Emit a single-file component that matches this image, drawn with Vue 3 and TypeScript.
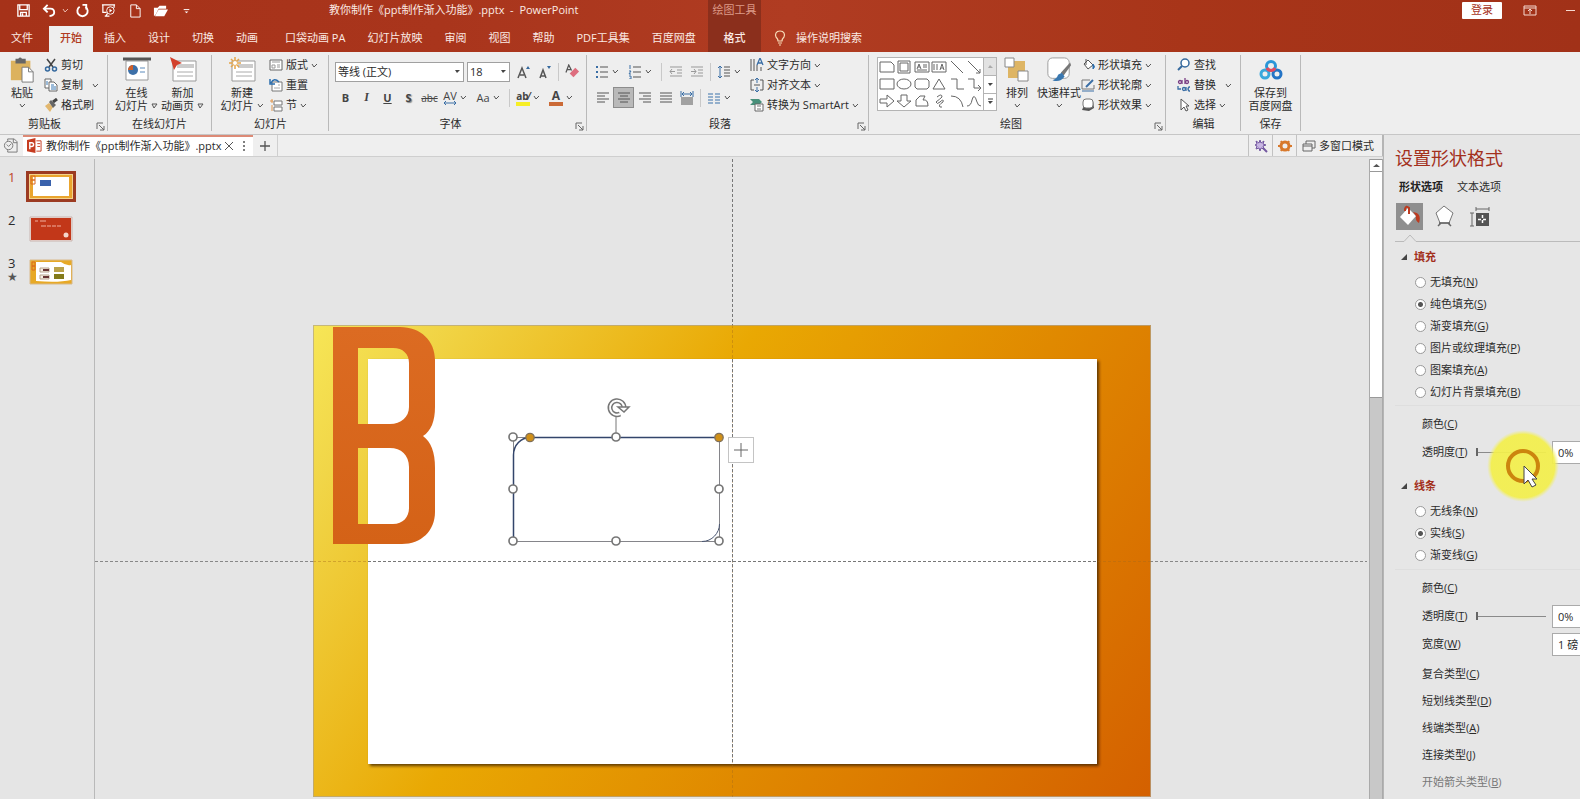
<script setup lang="ts">
import { ref } from 'vue'

interface Choice { value: string; text: string; key: string }

const fileName = '教你制作《ppt制作渐入功能》.pptx'
const tabsBefore = ['文件', '开始', '插入', '设计', '切换', '动画', '口袋动画 PA', '幻灯片放映', '审阅', '视图', '帮助', 'PDF工具集', '百度网盘']
const activeTab = ref('开始')

const quickTools = [
  { id: 'save', label: '保存' }, { id: 'undo', label: '撤消' }, { id: 'redo', label: '重复' },
  { id: 'show', label: '从头开始' }, { id: 'new', label: '新建' }, { id: 'open', label: '打开' }, { id: 'more', label: '自定义' }
]

const fillChoices: Choice[] = [
  { value: 'none', text: '无填充', key: 'N' },
  { value: 'solid', text: '纯色填充', key: 'S' },
  { value: 'gradient', text: '渐变填充', key: 'G' },
  { value: 'picture', text: '图片或纹理填充', key: 'P' },
  { value: 'pattern', text: '图案填充', key: 'A' },
  { value: 'background', text: '幻灯片背景填充', key: 'B' }
]
const lineChoices: Choice[] = [
  { value: 'none', text: '无线条', key: 'N' },
  { value: 'solid', text: '实线', key: 'S' },
  { value: 'gradient', text: '渐变线', key: 'G' }
]
const lineTypes = [
  { text: '复合类型', key: 'C' }, { text: '短划线类型', key: 'D' }, { text: '线端类型', key: 'A' },
  { text: '连接类型', key: 'J' }, { text: '开始箭头类型', key: 'B', off: true }
]
const fill = ref('solid')
const line = ref('solid')
const fillAlpha = ref(0)
const lineAlpha = ref(0)

const aligns = [
  { label: '左对齐', d: 'M1 2H13M1 5H9M1 8H13M1 11H9' },
  { label: '居中', d: 'M1 2H13M3 5H11M1 8H13M3 11H11' },
  { label: '右对齐', d: 'M1 2H13M5 5H13M1 8H13M5 11H13' },
  { label: '两端对齐', d: 'M1 2H13M1 5H13M1 8H13M1 11H13' }
]

const shapes = [
  'M1 2H12L15 5V12H1Z', 'M2 1H14V13H2ZM4 3H12V11H4Z', 'M1 2H15V12H1ZM3 9L5 4L7 9M4 7H6M9 5H13M9 7H13M3 10H13',
  'M1 2H15V12H1ZM3 4V10M6 4V10M9 10L11 4L13 10M10 8H12', 'M2 1L14 13', 'M2 1L14 13M14 9V13H10',
  'M1 2H15V12H1Z', 'M1 7A7 5 0 1 0 15 7A7 5 0 1 0 1 7', 'M3 2H13L15 4V10L13 12H3L1 10V4Z',
  'M8 2L14 12H2Z', 'M2 2H8V12H15', 'M2 2H8V11H14M12 8L15 11L12 14',
  'M1 5H8V1L15 7L8 13V9H1Z', 'M5 1H11V7H15L8 13L1 7H5Z', 'M2 12V6L6 2H11L9 6Q14 5 14 12Z',
  'M6 3Q11 -1 11 3Q9 5 5 8Q6 11 9 8Q13 4 12 8Q7 11 9 13H11', 'M2 2Q12 2 14 13', 'M1 12Q5 12 6 6Q8 -2 11 8Q12 12 15 12'
]

const handles = [
  [200, 112], [303, 112], [200, 164], [406, 164], [200, 216], [303, 216], [406, 216]
]
</script>

<template>
  <svg class="sprite" aria-hidden="true">
    <symbol id="chev" viewBox="0 0 7 7"><path d="M1 2L3 5L6 2" fill="none" stroke="#555" /></symbol>
    <symbol id="tri" viewBox="0 0 7 7"><path d="M1 2H6L3 5Z" fill="#444" /></symbol>
    <symbol id="trio" viewBox="0 0 7 7"><path d="M1 2H6L3 6Z" fill="none" stroke="#555" /></symbol>
    <symbol id="launch" viewBox="0 0 9 9"><path d="M1 7V1H7M3 3L8 8M8 4V8H4" fill="none" stroke="#666" /></symbol>

    <symbol id="save" viewBox="0 0 16 16"><path d="M2 2H14V14H2ZM4 2V7H12V2M5 14V10H11V14M7 11V14" fill="none" stroke="#fff" stroke-width="1.4" /></symbol>
    <symbol id="undo" viewBox="0 0 16 16"><path d="M2 6H9Q13 6 13 10Q13 13 8 14M6 2L2 6L6 10" fill="none" stroke="#fff" stroke-width="2" /></symbol>
    <symbol id="redo" viewBox="0 0 16 16"><path d="M5 4A5.500 5.500 0 1 0 11 4M8 2H13M12 2V7" fill="none" stroke="#fff" stroke-width="2" /></symbol>
    <symbol id="show" viewBox="0 0 16 16"><path d="M1 2H15M2 2V10H6M14 2V5M5 14L7 11M4 14H9" fill="none" stroke="#fff" stroke-width="1.300" /><circle cx="10" cy="8" r="4" fill="none" stroke="#fff" /><path d="M9 6L12 8L9 10Z" fill="#fff" /></symbol>
    <symbol id="new" viewBox="0 0 16 16"><path d="M4 2H10L14 6V15H4ZM10 2V6H14" fill="none" stroke="#fff" /></symbol>
    <symbol id="open" viewBox="0 0 16 16"><path d="M1 14V5H5L7 3H14V6H6L3 12Z M2 14L6 7H16L12 14Z" fill="#fff" /></symbol>
    <symbol id="more" viewBox="0 0 16 16"><path d="M5 7H11" stroke="#fff" /><path d="M6 9H10L8 11Z" fill="#fff" /></symbol>

    <symbol id="paste" viewBox="0 0 26 28"><path d="M1 4H22V25H1Z" fill="#dcb25e" /><path d="M6 2H9Q11 -1 13 2H17V7H6Z" fill="#666" /><path d="M13 11H20L25 16V27H13Z" fill="#fff" stroke="#777" /><path d="M20 11V16H25" fill="none" stroke="#777" /></symbol>
    <symbol id="cut" viewBox="0 0 14 14"><path d="M3 1L9 9M11 1L5 9" stroke="#444" stroke-width="1.500" /><circle cx="3.500" cy="11" r="2" fill="none" stroke="#35699e" stroke-width="1.500" /><circle cx="10.500" cy="11" r="2" fill="none" stroke="#35699e" stroke-width="1.500" /></symbol>
    <symbol id="copy" viewBox="0 0 14 14"><path d="M1 1H7V10H1Z" fill="#fff" stroke="#666" /><path d="M5 4H10L13 7V13H5Z" fill="#fff" stroke="#666" /><path d="M7 7H10M7 9H12M7 11H12M2 4H4M2 6H4" stroke="#3a78b4" /></symbol>
    <symbol id="brush" viewBox="0 0 14 14"><path d="M1 8L5 5L9 9L6 14Z" fill="#e2b76e" /><path d="M5 4L7 2L12 7L9 10Z" fill="#666" /><path d="M9 4L13 1" stroke="#444" stroke-width="3" /></symbol>
    <symbol id="online" viewBox="0 0 28 26"><path d="M3 4H25V23H3Z" fill="#fff" stroke="#999" /><path d="M0 2H28" stroke="#555" stroke-width="3" /><circle cx="10" cy="13" r="5" fill="#3d70a8" /><path d="M10 13V8A5 5 0 0 0 5 13Z" fill="#d0602a" /><path d="M17 11H22M17 15H22" stroke="#5b8abb" /></symbol>
    <symbol id="anim" viewBox="0 0 28 26"><path d="M4 4H27V24H4Z" fill="#fff" stroke="#999" /><path d="M8 7H25V11H8Z" fill="#ccc" /><path d="M8 15H24M8 19H24" stroke="#aaa" /><path d="M1 0L13 6L8 8L5 13Z" fill="#d2402c" /></symbol>
    <symbol id="slide" viewBox="0 0 28 26"><path d="M4 4H27V24H4Z" fill="#fff" stroke="#999" /><path d="M10 7H25V11H10Z" fill="#ccc" /><path d="M8 15H24M8 19H24" stroke="#aaa" /><path d="M7 0V12M1 6H13M3 2L11 10M11 2L3 10" stroke="#e5a54a" stroke-width="1.500" /><circle cx="7" cy="6" r="2" fill="#fff" /></symbol>
    <symbol id="layout" viewBox="0 0 14 14"><path d="M1 2H13V12H1Z" fill="#fff" stroke="#666" /><path d="M3 4H11M3 7H6V10H3ZM8 7H11M8 9H11" fill="none" stroke="#999" /></symbol>
    <symbol id="reset" viewBox="0 0 14 14"><path d="M3 4H13V13H3Z" fill="#fff" stroke="#777" /><path d="M5 10H11M9 7H11" stroke="#aaa" /><path d="M2 5Q5 -1 10 4M1 1V6H6" fill="none" stroke="#2d6fae" stroke-width="1.500" /></symbol>
    <symbol id="section" viewBox="0 0 14 14"><path d="M5 3H13V7H5ZM5 9H13V13H5Z" fill="#fff" stroke="#777" /><path d="M1 3H4M3 1V5M3 7V13" stroke="#e0974e" /></symbol>

    <symbol id="eraser" viewBox="0 0 16 16"><path d="M1 9L4 1L7 7M2 6H6" fill="none" stroke="#555" stroke-width="1.300" /><path d="M5 10L11 4L15 8L9 14Z" fill="#dd6d7e" /></symbol>
    <symbol id="bullets" viewBox="0 0 14 14"><path d="M1 2H3M1 7H3M1 12H3" stroke="#3a6ea5" stroke-width="2" /><path d="M5 2H13M5 7H13M5 12H13" stroke="#555" /></symbol>
    <symbol id="numbers" viewBox="0 0 14 14"><path d="M2 0V4M1 6H3L1 9H3M1 11H3V14H1" fill="none" stroke="#3a6ea5" /><path d="M5 2H13M5 7H13M5 12H13" stroke="#555" /></symbol>
    <symbol id="outdent" viewBox="0 0 14 14"><path d="M1 2H13M8 5H13M8 8H13M1 11H13M1 6.500H6M3 4L1 6.500L3 9" fill="none" stroke="#999" /></symbol>
    <symbol id="indent" viewBox="0 0 14 14"><path d="M1 2H13M8 5H13M8 8H13M1 11H13M1 6.500H6M4 4L6 6.500L4 9" fill="none" stroke="#999" /></symbol>
    <symbol id="spacing" viewBox="0 0 14 14"><path d="M3 1V13M1 3L3 1L5 3M1 11L3 13L5 11" fill="none" stroke="#3a6ea5" /><path d="M7 2H13M7 5H13M7 8H13M7 11H13" stroke="#555" /></symbol>
    <symbol id="dist" viewBox="0 0 14 14"><path d="M1 0V6M13 0V6M2 3H12M4 1L2 3L4 5M10 1L12 3L10 5" fill="none" stroke="#3a6ea5" /><path d="M1 7H13M1 9H13M1 11H13M1 13H13" stroke="#555" /></symbol>
    <symbol id="columns" viewBox="0 0 14 14"><path d="M1 3H6M1 6H6M1 9H6M1 12H6M8 3H13M8 6H13M8 9H13M8 12H13" stroke="#3a72ab" /></symbol>
    <symbol id="textdir" viewBox="0 0 14 14"><path d="M1 1V13M4 1V13M7 7V13M11 9V13" stroke="#555" /><path d="M7 7L10 0L13 7M8 5H12" fill="none" stroke="#3a6ea5" stroke-width="1.300" /></symbol>
    <symbol id="aligntext" viewBox="0 0 14 14"><path d="M4 2H1V12H4M10 2H13V12H10M4 7H10" fill="none" stroke="#555" /><path d="M7 0V5M5 2L7 0L9 2M7 9V14M5 12L7 14L9 12" fill="none" stroke="#3a6ea5" /></symbol>
    <symbol id="smart" viewBox="0 0 14 14"><path d="M0 1H9L12 4L9 7H0L3 4Z" fill="#48907a" /><path d="M5 6H13V13H5Z" fill="#fff" stroke="#666" /><path d="M7 8H11M7 11H11" stroke="#777" /></symbol>

    <symbol id="arrange" viewBox="0 0 26 26"><path d="M4 4H21V21H4Z" fill="#deb564" /><path d="M1 1H10V10H1ZM14 14H24V24H14Z" fill="#fff" stroke="#888" /></symbol>
    <symbol id="quick" viewBox="0 0 26 28"><rect x="1" y="1" width="23" height="22" rx="5" fill="#fff" stroke="#999" /><path d="M25 6L15 17L18 20L26 9Z" fill="#777" /><path d="M16 17L19 21Q14 28 6 25Q11 23 12 19Z" fill="#3a78b0" /></symbol>
    <symbol id="sfill" viewBox="0 0 14 14"><path d="M3 6L7 2L12 7L7 11Z" fill="#fff" stroke="#555" /><path d="M5 7V1" stroke="#555" /><path d="M12 6Q15 9 12 11Z" fill="#2d6fae" stroke="#2d6fae" /></symbol>
    <symbol id="sline" viewBox="0 0 14 14"><path d="M9 2H1V11H13V7" fill="none" stroke="#777" /><path d="M5 9L12 2" stroke="#3a6ea5" stroke-width="2" /><path d="M1 13H13" stroke="#3a6ea5" /></symbol>
    <symbol id="seffect" viewBox="0 0 14 14"><path d="M4 5L12 3L13 10L8 13L1 12Z" fill="#555" /><rect x="2" y="1" width="10" height="9" rx="3" fill="#fff" stroke="#777" /></symbol>
    <symbol id="find" viewBox="0 0 14 14"><circle cx="8" cy="5" r="4" fill="#fff" stroke="#35699e" stroke-width="1.500" /><path d="M5 8L1 12" stroke="#35699e" stroke-width="2" /></symbol>
    <symbol id="replace" viewBox="0 0 14 14"><circle cx="3" cy="4" r="1.500" fill="none" stroke="#7b3f85" stroke-width="1.300" /><path d="M5 2V6M8 0V6" stroke="#7b3f85" stroke-width="1.300" /><circle cx="10" cy="4" r="1.500" fill="none" stroke="#7b3f85" stroke-width="1.300" /><circle cx="7" cy="11" r="1.500" fill="none" stroke="#3a6ea5" stroke-width="1.300" /><path d="M9 9V13M13 9H12Q10 11 12 13H13M1 8V11H4" fill="none" stroke="#3a6ea5" stroke-width="1.300" /></symbol>
    <symbol id="select" viewBox="0 0 14 14"><path d="M4 1V12L7 9L9 13L11 12L9 8H12Z" fill="#fff" stroke="#555" /></symbol>
    <symbol id="netdisk" viewBox="0 0 24 20"><circle cx="6" cy="14" r="4" fill="none" stroke="#3aa8dc" stroke-width="3" /><circle cx="18" cy="14" r="4" fill="none" stroke="#2374c6" stroke-width="3" /><circle cx="12" cy="6" r="4.500" fill="none" stroke="#2a96d8" stroke-width="3" /><path d="M8 8A4.500 4.500 0 0 0 16 8" fill="none" stroke="#e44a5e" stroke-width="3" /></symbol>
  </svg>

  <div class="app">
    <header class="head">
      <div class="head-main">
        <div class="bar">
          <div class="quick">
            <template v-for="q in quickTools" :key="q.id">
              <button class="qbtn" :aria-label="q.label"><svg class="i15"><use :href="'#' + q.id" /></svg></button>
              <svg v-if="q.id === 'undo'" class="qchev" viewBox="0 0 7 7"><path d="M1 2L3 5L6 2" fill="none" stroke="#e9b6a8" /></svg>
            </template>
          </div>
          <h1 class="title">{{ fileName }}&nbsp; -&nbsp; PowerPoint</h1>
        </div>
        <nav class="tabs">
          <button v-for="t in tabsBefore" :key="t" class="tab" :class="{ on: t === activeTab, shift: t.startsWith('口袋') || t === '开始' }" @click="activeTab = t">{{ t }}</button>
        </nav>
      </div>
      <div class="context">
        <span class="context-name">绘图工具</span>
        <button class="context-tab">格式</button>
      </div>
      <div class="head-end">
        <div class="bar end">
          <button class="login">登录</button>
          <button class="winbtn" aria-label="功能区显示选项"><svg class="i14" viewBox="0 0 14 14"><path d="M1 3H13V12H1ZM1 5H13M7 11V6M5 8L7 6L9 8" fill="none" stroke="#f6d9d0" /></svg></button>
          <button class="winbtn" aria-label="最小化"><svg class="i14" viewBox="0 0 14 14"><path d="M3 7.500H12" stroke="#f6d9d0" /></svg></button>
        </div>
        <button class="tell">
          <svg class="bulb" viewBox="0 0 12 16"><path d="M4 11Q4 9 2 7Q1 5 2 3Q3 1 6 1Q9 1 10 3Q11 5 10 7Q8 9 8 11ZM4 13H8M5 15H7" fill="none" stroke="#f7dcb8" stroke-width="1.200" /></svg>
          操作说明搜索
        </button>
      </div>
    </header>

    <section class="ribbon" aria-label="功能区">
      <div class="group g-clip">
        <div class="body">
          <button class="big w44"><svg class="ibig"><use href="#paste" /></svg><span>粘贴</span><svg class="c7"><use href="#chev" /></svg></button>
          <div class="rows">
            <button class="small"><svg class="i14"><use href="#cut" /></svg>剪切</button>
            <button class="small"><svg class="i14"><use href="#copy" /></svg>复制<svg class="c7 far"><use href="#chev" /></svg></button>
            <button class="small"><svg class="i14"><use href="#brush" /></svg>格式刷</button>
          </div>
        </div>
        <div class="foot"><span>剪贴板</span><button class="launch" aria-label="剪贴板选项"><svg><use href="#launch" /></svg></button></div>
      </div>

      <div class="group g-online">
        <div class="body center">
          <button class="big w46"><svg class="ibig"><use href="#online" /></svg><span>在线</span><span>幻灯片 <svg class="c7"><use href="#trio" /></svg></span></button>
          <button class="big w46"><svg class="ibig"><use href="#anim" /></svg><span>新加</span><span>动画页 <svg class="c7"><use href="#trio" /></svg></span></button>
        </div>
        <div class="foot"><span>在线幻灯片</span></div>
      </div>

      <div class="group g-slide">
        <div class="body">
          <button class="big w46"><svg class="ibig"><use href="#slide" /></svg><span>新建</span><span>幻灯片 <svg class="c7"><use href="#chev" /></svg></span></button>
          <div class="rows">
            <button class="small"><svg class="i14"><use href="#layout" /></svg>版式<svg class="c7"><use href="#chev" /></svg></button>
            <button class="small"><svg class="i14"><use href="#reset" /></svg>重置</button>
            <button class="small"><svg class="i14"><use href="#section" /></svg>节<svg class="c7"><use href="#chev" /></svg></button>
          </div>
        </div>
        <div class="foot"><span>幻灯片</span></div>
      </div>

      <div class="group g-font">
        <div class="body lines">
          <div class="line">
            <div class="combo face"><select aria-label="字体"><option>等线 (正文)</option></select><svg class="c7"><use href="#tri" /></svg></div>
            <div class="combo size"><select aria-label="字号"><option>18</option></select><svg class="c7"><use href="#tri" /></svg></div>
            <button class="tool" aria-label="增大字号"><svg class="i14" viewBox="0 0 14 14"><path d="M1 13L5 3L9 13M3 10H7" fill="none" stroke="#555" stroke-width="1.500" /><path d="M9 4L11 1L13 4Z" fill="#35699e" /></svg></button>
            <button class="tool" aria-label="减小字号"><svg class="i14" viewBox="0 0 14 14"><path d="M2 13L5 5L8 13M3 11H7" fill="none" stroke="#555" stroke-width="1.500" /><path d="M9 1L11 4L13 1Z" fill="#35699e" /></svg></button>
            <i class="sep"></i>
            <button class="tool" aria-label="清除格式"><svg class="i15"><use href="#eraser" /></svg></button>
          </div>
          <div class="line">
            <button class="tool b">B</button>
            <button class="tool it">I</button>
            <button class="tool un">U</button>
            <button class="tool sh">S</button>
            <button class="tool st">abc</button>
            <button class="split"><span class="face20 av">AV<svg viewBox="0 0 14 4"><path d="M1 2H13M3 0L1 2L3 4M11 0L13 2L11 4" fill="none" stroke="#3a6ea5" /></svg></span><svg class="c7"><use href="#chev" /></svg></button>
            <button class="split"><span class="face20 aa">Aa</span><svg class="c7"><use href="#chev" /></svg></button>
            <i class="sep"></i>
            <button class="split"><span class="face20 mark hl">ab⁄</span><svg class="c7"><use href="#chev" /></svg></button>
            <button class="split"><span class="face20 mark fc">A</span><svg class="c7"><use href="#chev" /></svg></button>
          </div>
        </div>
        <div class="foot"><span>字体</span><button class="launch" aria-label="字体选项"><svg><use href="#launch" /></svg></button></div>
      </div>

      <div class="group g-para">
        <div class="body">
          <div class="lines para-left">
            <div class="line">
              <button class="split" aria-label="项目符号"><span class="face20"><svg class="i14"><use href="#bullets" /></svg></span><svg class="c7"><use href="#chev" /></svg></button>
              <button class="split" aria-label="编号"><span class="face20"><svg class="i14"><use href="#numbers" /></svg></span><svg class="c7"><use href="#chev" /></svg></button>
              <i class="sep"></i>
              <button class="tool" aria-label="减少缩进"><svg class="i14"><use href="#outdent" /></svg></button>
              <button class="tool" aria-label="增加缩进"><svg class="i14"><use href="#indent" /></svg></button>
              <i class="sep"></i>
              <button class="split" aria-label="行距"><span class="face20"><svg class="i14"><use href="#spacing" /></svg></span><svg class="c7"><use href="#chev" /></svg></button>
            </div>
            <div class="line">
              <button v-for="a in aligns" :key="a.label" class="tool" :class="{ pressed: a.label === '居中' }" :aria-label="a.label"><svg class="i14" viewBox="0 0 14 14"><path :d="a.d" stroke="#555" /></svg></button>
              <button class="tool" aria-label="分散对齐"><svg class="i14"><use href="#dist" /></svg></button>
              <i class="sep"></i>
              <button class="split" aria-label="分栏"><span class="face20"><svg class="i14"><use href="#columns" /></svg></span><svg class="c7"><use href="#chev" /></svg></button>
            </div>
          </div>
          <div class="rows">
            <button class="small"><svg class="i14"><use href="#textdir" /></svg>文字方向<svg class="c7"><use href="#chev" /></svg></button>
            <button class="small"><svg class="i14"><use href="#aligntext" /></svg>对齐文本<svg class="c7"><use href="#chev" /></svg></button>
            <button class="small"><svg class="i14"><use href="#smart" /></svg>转换为 SmartArt<svg class="c7"><use href="#chev" /></svg></button>
          </div>
        </div>
        <div class="foot"><span>段落</span><button class="launch" aria-label="段落选项"><svg><use href="#launch" /></svg></button></div>
      </div>

      <div class="group g-draw">
        <div class="body">
          <div class="gallery">
            <div class="cells">
              <button v-for="(d, n) in shapes" :key="n" class="cell" :aria-label="'形状 ' + (n + 1)"><svg viewBox="0 0 16 14"><path :d="d" fill="none" stroke="#666" /></svg></button>
            </div>
            <div class="scroll">
              <button aria-label="上一行" class="dim"><svg viewBox="0 0 7 7"><path d="M1 5H6L3 2Z" fill="#aaa" /></svg></button>
              <button aria-label="下一行"><svg><use href="#tri" /></svg></button>
              <button aria-label="更多形状"><svg viewBox="0 0 7 7"><path d="M1 1H6" stroke="#444" /><path d="M1 3H6L3 6Z" fill="#444" /></svg></button>
            </div>
          </div>
          <button class="big w40"><svg class="ibig"><use href="#arrange" /></svg><span>排列</span><svg class="c7"><use href="#chev" /></svg></button>
          <button class="big w44"><svg class="ibig"><use href="#quick" /></svg><span>快速样式</span><svg class="c7"><use href="#chev" /></svg></button>
          <div class="rows">
            <button class="small"><svg class="i14"><use href="#sfill" /></svg>形状填充<svg class="c7"><use href="#chev" /></svg></button>
            <button class="small"><svg class="i14"><use href="#sline" /></svg>形状轮廓<svg class="c7"><use href="#chev" /></svg></button>
            <button class="small"><svg class="i14"><use href="#seffect" /></svg>形状效果<svg class="c7"><use href="#chev" /></svg></button>
          </div>
        </div>
        <div class="foot"><span>绘图</span><button class="launch" aria-label="绘图选项"><svg><use href="#launch" /></svg></button></div>
      </div>

      <div class="group g-edit">
        <div class="body">
          <div class="rows">
            <button class="small"><svg class="i14"><use href="#find" /></svg>查找</button>
            <button class="small"><svg class="i14"><use href="#replace" /></svg>替换<svg class="c7 far"><use href="#chev" /></svg></button>
            <button class="small"><svg class="i14"><use href="#select" /></svg>选择<svg class="c7"><use href="#chev" /></svg></button>
          </div>
        </div>
        <div class="foot"><span>编辑</span></div>
      </div>

      <div class="group g-save">
        <div class="body center">
          <button class="big w46"><svg class="ibig disk"><use href="#netdisk" /></svg><span>保存到</span><span>百度网盘</span></button>
        </div>
        <div class="foot"><span>保存</span></div>
      </div>
    </section>

    <div class="work">
      <div class="left">
        <div class="docbar">
          <button class="dhome" aria-label="历史文档"><svg class="i15" viewBox="0 0 16 16"><path d="M5 3V1H12L15 4V15H5V13M11 1V5H15" fill="none" stroke="#777" /><circle cx="6" cy="8" r="4.500" fill="#eee" stroke="#777" /><path d="M4 7L6 9L9 6" fill="none" stroke="#777" /></svg></button>
          <div class="doctab">
            <svg class="i15" viewBox="0 0 16 16"><path d="M0 2L9 0V16L0 14Z" fill="#c63c20" /><path d="M10 3H15V14H10M11 6H14M11 9H14" fill="none" stroke="#c63c20" /><path d="M3 12V5H5Q7 5 7 7Q7 9 5 9H3" fill="none" stroke="#fff" stroke-width="1.500" /></svg>
            <span class="docname">{{ fileName }}</span>
            <button aria-label="关闭"><svg class="i10" viewBox="0 0 10 10"><path d="M1 1L9 9M9 1L1 9" stroke="#555" /></svg></button>
            <button aria-label="更多"><svg class="i10" viewBox="0 0 10 10"><path d="M5 0V2M5 4V6M5 8V10" stroke="#555" stroke-width="1.500" /></svg></button>
          </div>
          <button class="dadd" aria-label="新建标签"><svg class="i12" viewBox="0 0 12 12"><path d="M6 1V11M1 6H11" stroke="#555" stroke-width="1.300" /></svg></button>
          <div class="docend">
            <button class="dtool" aria-label="魔法棒"><svg class="i14" viewBox="0 0 14 14"><path d="M6 1L7 4L10 2L9 5L12 6L9 7L10 10L7 9L6 12L5 9L2 10L3 7L1 6L3 5L2 2L5 4Z" fill="#c8b6e2" stroke="#7358a0" /><path d="M9 9L13 13" stroke="#7358a0" stroke-width="2" /></svg></button>
            <button class="dtool" aria-label="设置"><svg class="i14" viewBox="0 0 14 14"><circle cx="7" cy="7" r="4" fill="none" stroke="#d8792c" stroke-width="3" /><path d="M3 2L4 4M11 2L10 4M3 12L4 10M11 12L10 10M0 7H3M11 7H14" stroke="#d8792c" stroke-width="2" /></svg></button>
            <button class="multi"><svg class="i14" viewBox="0 0 14 14"><path d="M1 5H10V12H1ZM1 7H10M4 5V2H13V9H10" fill="none" stroke="#666" /></svg>多窗口模式</button>
          </div>
        </div>

        <div class="desk">
          <aside class="thumbs">
            <button class="thumb on">
              <span class="no">1</span>
              <svg viewBox="0 0 50 31"><path d="M0 0H50V31H0Z" fill="#9c3b22" /><path d="M3 3H47V28H3Z" fill="#f3d28c" /><path d="M4 4H46V27H4Z" fill="#eaa52e" /><path d="M7 6H43V25H7Z" fill="#fff" /><path d="M5 5H9V9H5ZM5 9H9V13H5Z" fill="none" stroke="#da6a20" /><path d="M14 9H25V15H14Z" fill="#3a62ac" /></svg>
            </button>
            <button class="thumb">
              <span class="no">2</span>
              <svg viewBox="0 0 50 31"><path d="M4 3H46V27H4Z" fill="#f4ded8" stroke="#c9b5b0" /><path d="M5 4H45V26H5Z" fill="#c23719" /><path d="M9 7H12M14 7H20M15 12H20M21 12H25M26 12H30M31 12H35" stroke="#f0b0a0" /><circle cx="40" cy="21" r="2.500" fill="#f4d6cc" /></svg>
            </button>
            <button class="thumb">
              <span class="no">3<em>★</em></span>
              <svg viewBox="0 0 50 31"><path d="M4 3H46V27H4Z" fill="#e7a926" stroke="#d8b98a" /><path d="M10 5H35Q40 9 45 8V23Q32 26 10 24Z" fill="#fff" /><path d="M6 5H9V9H6ZM6 9H9V13H6Z" fill="none" stroke="#da6a20" /><path d="M14 11H23V15H14ZM14 18H23V22H14Z" fill="#f5eee4" stroke="#b5a08a" /><path d="M17 13H23M17 20H23" stroke="#633" stroke-width="2" /><path d="M28 10H38V15H28Z" fill="#baa24a" /><path d="M28 17H38V22H28Z" fill="#837b1b" /></svg>
            </button>
          </aside>

          <main class="canvas">
            <i class="vguide"></i>
            <div class="stage">
              <i class="hguide"></i>
              <svg class="slide" viewBox="0 0 838 472">
                <defs>
                  <linearGradient id="gold" gradientUnits="userSpaceOnUse" x1="0" y1="0" x2="778" y2="556">
                    <stop offset="0" stop-color="#f7e656" /><stop offset=".1" stop-color="#f1d648" /><stop offset=".38" stop-color="#e9a803" /><stop offset=".64" stop-color="#e08900" /><stop offset="1" stop-color="#d46000" />
                  </linearGradient>
                  <linearGradient id="rust" x1="0" y1="0" x2="0" y2="1"><stop offset="0" stop-color="#dc6b22" /><stop offset="1" stop-color="#d46217" /></linearGradient>
                  <filter id="drop" x="-5%" y="-5%" width="110%" height="110%"><feDropShadow dx="2" dy="2" stdDeviation="1.500" flood-color="#3c2400" flood-opacity=".8" /></filter>
                </defs>
                <rect width="838" height="472" fill="url(#gold)" />
                <rect x=".5" y=".5" width="837" height="471" fill="none" stroke="#b0a48c" stroke-opacity=".7" />
                <rect x="55" y="34" width="729" height="405" fill="#fff" filter="url(#drop)" />
                <path fill="url(#rust)" fill-rule="evenodd" d="M20 2H87C108 2 122 16 122 35V82C122 96 118 106 110 111C118 117 122 127 122 143V187C122 206 108 219 89 219H20ZM45 23V99H77C88 99 96 92 96 82V38C96 29 90 23 80 23ZM45 123V199H80C90 199 96 192 96 183V142C96 130 88 123 77 123Z" />
                <path d="M419.500 0V472M0 236.500H838" stroke="#a66a1a" stroke-opacity=".4" stroke-dasharray="3 2" />
                <path d="M419.500 34V439M55 236.500H784" stroke="#777" stroke-dasharray="3 2" />
                <path d="M200.500 112.500H406.500V216.500H200.500Z" fill="#fff" stroke="#85858a" />
                <path d="M200.500 216.500V130C200.500 120 208 112.500 217 112.500H406.500" fill="none" stroke="#33456b" stroke-width="1.500" />
                <path d="M406.500 199C406.500 208 399 216.500 389 216.500" fill="none" stroke="#4a5672" />
                <path d="M303 112V92" stroke="#777" />
                <circle v-for="h in handles" :key="h.join()" :cx="h[0]" :cy="h[1]" r="4" fill="#fff" stroke="#777" stroke-width="1.700" />
                <circle cx="217" cy="112.500" r="4.200" fill="#d09018" stroke="#80705a" stroke-width="1.300" />
                <circle cx="406" cy="112.500" r="4.200" fill="#d09018" stroke="#80705a" stroke-width="1.300" />
                <path d="M307 89A7 7 0 1 1 311 83" fill="none" stroke="#777" stroke-width="5" />
                <path d="M307 89A7 7 0 1 1 311 83" fill="none" stroke="#fff" stroke-width="2" />
                <path d="M305 82H316L311 87Z" fill="#fff" stroke="#777" stroke-width="1.500" />
              </svg>
              <button class="addon" aria-label="布局选项"><svg viewBox="0 0 16 16"><path d="M8 1V15M1 8H15" stroke="#666" /></svg></button>
            </div>
          </main>

          <div class="vbar">
            <button aria-label="向上滚动"><svg viewBox="0 0 9 9"><path d="M1 6H8L4.500 3Z" fill="#555" /></svg></button>
            <div class="knob"></div>
          </div>
        </div>
      </div>

      <aside class="pane">
        <h2>设置形状格式</h2>
        <div class="ptabs"><button class="on">形状选项</button><button>文本选项</button></div>
        <div class="picons">
          <button class="on" aria-label="填充与线条"><svg viewBox="0 0 27 27"><path d="M4 14L12 5L20 13L12 22Z" fill="#fff" /><path d="M9 8V6Q10 2 13 5V11" fill="none" stroke="#bd3b20" stroke-width="2" /><path d="M17 9Q26 10 23 20Q19 18 20 13Z" fill="#bd3b20" /></svg></button>
          <button aria-label="效果"><svg viewBox="0 0 27 27"><path d="M13 3L22 10L18 20H9L5 10Z" fill="#fff" stroke="#777" /><path d="M8 20H19M7 23L10 20M20 23L17 20" stroke="#666" stroke-width="1.500" /></svg></button>
          <button aria-label="大小与属性"><svg viewBox="0 0 27 27"><path d="M10 10H23V23H10Z" fill="#555" /><path d="M10 6H23M10 4V8M23 4V8M6 10V23M4 10H8M4 23H8" stroke="#666" /><path d="M16.500 12V21M12 16.500H21" stroke="#fff" stroke-width="1.500" stroke-dasharray="3 2" /></svg></button>
        </div>
        <div class="rule"><i></i><svg viewBox="0 0 12 8"><path d="M0 7.500L6 1L12 7.500" fill="#e6e6e6" stroke="#bbb" /></svg><i class="rest"></i></div>

        <button class="sec"><svg viewBox="0 0 8 8"><path d="M7 1V7H1Z" fill="#444" /></svg>填充</button>
        <div class="radios">
          <label v-for="c in fillChoices" :key="c.value"><input v-model="fill" type="radio" name="fill" :value="c.value" /><span>{{ c.text }}(<u>{{ c.key }}</u>)</span></label>
        </div>
        <div class="opts">
          <div class="opt"><span>颜色(<u>C</u>)</span></div>
          <div class="opt"><label for="fa">透明度(<u>T</u>)</label><input id="fa" v-model="fillAlpha" type="range" min="0" max="100" /><input class="num" type="text" :value="fillAlpha + '%'" aria-label="填充透明度" /></div>
        </div>

        <button class="sec"><svg viewBox="0 0 8 8"><path d="M7 1V7H1Z" fill="#444" /></svg>线条</button>
        <div class="radios">
          <label v-for="c in lineChoices" :key="c.value"><input v-model="line" type="radio" name="line" :value="c.value" /><span>{{ c.text }}(<u>{{ c.key }}</u>)</span></label>
        </div>
        <div class="opts last">
          <div class="opt"><span>颜色(<u>C</u>)</span></div>
          <div class="opt"><label for="la">透明度(<u>T</u>)</label><input id="la" v-model="lineAlpha" type="range" min="0" max="100" /><input class="num" type="text" :value="lineAlpha + '%'" aria-label="线条透明度" /></div>
          <div class="opt"><label for="lw">宽度(<u>W</u>)</label><input id="lw" class="num" type="text" value="1 磅" /></div>
        </div>
        <div class="types">
          <div v-for="t in lineTypes" :key="t.key" :class="{ off: t.off }">{{ t.text }}(<u>{{ t.key }}</u>)</div>
        </div>

        <svg class="pointer" viewBox="0 0 72 72" aria-hidden="true">
          <defs><radialGradient id="halo"><stop offset=".88" stop-color="#f3ef4c" stop-opacity=".93" /><stop offset="1" stop-color="#f0ee7a" stop-opacity="0" /></radialGradient></defs>
          <circle cx="36" cy="36" r="36" fill="url(#halo)" />
          <circle cx="36" cy="36" r="15" fill="none" stroke="#cc850e" stroke-width="4" />
          <path d="M37 36V54L41 50L45 57L49 55L45 49H50Z" fill="#fff" stroke="#444" />
        </svg>
      </aside>
    </div>
  </div>
</template>

<style>
html, body { margin: 0; overflow: hidden; }
</style>

<style scoped>
.sprite { position: absolute; width: 0; height: 0; }
.app {
  display: flex; flex-direction: column; height: 100vh; overflow: hidden;
  background: #e5e5e5; color: #2b2b2b; font: 11px/14px "Open Sans", "Noto Sans CJK SC", sans-serif;
}
.app * { box-sizing: border-box; }
button, input, select { font: inherit; color: inherit; margin: 0; padding: 0; border: 0; background: none; }
button { display: flex; align-items: center; justify-content: center; white-space: nowrap; }
svg { display: block; flex: none; }
i { font-style: normal; }
.i15 { width: 15px; height: 15px; }
.i14 { width: 14px; height: 14px; }
.i12 { width: 12px; height: 12px; }
.i10 { width: 10px; height: 10px; }
.c7 { width: 7px; height: 7px; }

.head { display: flex; height: 52px; flex: none; color: #fbeae4; background: linear-gradient(90deg, #a63219, #a9351c 28%, #b03c22 50%, #a83519 75%, #a13118); }
.head-main { width: 708px; flex: none; }
.bar { display: flex; align-items: center; height: 20px; margin-bottom: 6px; }
.quick { display: flex; align-items: center; padding-left: 10px; width: 329px; }
.qbtn { width: 26px; height: 20px; }
.qchev { width: 7px; height: 7px; }
.title { margin: 0; font-size: 11px; font-weight: 400; white-space: nowrap; }
.tabs { display: flex; height: 26px; }
.tab { padding: 0 11px; height: 26px; padding-bottom: 2px; }
.tab.shift { margin-left: 5px; }
.tab.on { background: #eee; color: #b03a20; font-weight: 500; }
.context { width: 53px; flex: none; display: flex; flex-direction: column; background: #8b2f1c; }
.context-name { height: 26px; line-height: 20px; text-align: center; color: #dc9a88; }
.context-tab { height: 26px; padding-bottom: 2px; font-weight: 500; }
.head-end { flex: 1; min-width: 0; }
.end { justify-content: flex-end; }
.login { width: 40px; height: 17px; margin-right: 18px; background: #fff; color: #a63219; border-radius: 1px; }
.winbtn { width: 20px; height: 20px; margin-right: 20px; }
.winbtn:last-child { margin: 0; }
.tell { gap: 10px; height: 24px; padding-left: 13px; }
.bulb { width: 12px; height: 16px; }

.ribbon { display: flex; height: 83px; flex: none; padding: 3px 0 3px; background: #eee; border-bottom: 1px solid #c6c6c6; }
.group { display: flex; flex-direction: column; flex: none; border-right: 1px solid #b9b9b9; }
.body { display: flex; height: 62px; }
.body.center { justify-content: center; }
.foot { display: flex; align-items: center; height: 15px; position: relative; justify-content: center; }
.launch { position: absolute; right: 2px; bottom: 0; }
.launch svg { width: 9px; height: 9px; }
.g-clip { width: 108px; }
.g-clip .foot { padding-right: 18px; }
.g-online { width: 104px; }
.g-slide { width: 117px; padding-left: 7px; }
.g-slide .foot { padding-right: 6px; }
.g-font { width: 258px; padding-left: 6px; }
.g-para { width: 282px; padding-left: 5px; }
.g-font .foot, .g-para .foot, .g-draw .foot { padding-right: 20px; }
.g-draw { width: 297px; padding-left: 8px; }
.g-edit { width: 75px; padding-left: 11px; }
.g-edit .foot { padding-right: 10px; }
.g-save { width: 60px; }

.big { flex-direction: column; justify-content: flex-start; padding-top: 2px; line-height: 13px; }
.big .ibig { width: 28px; height: 26px; margin-bottom: 3px; }
.big .disk { padding: 3px 2px; }
.big span { display: flex; align-items: center; gap: 3px; }
.big > .c7 { margin-top: 3px; }
.w40 { width: 40px; }
.w44 { width: 44px; }
.w46 { width: 46px; }
.rows { display: grid; grid-template-rows: repeat(3, 20px); justify-items: start; }
.small { gap: 3px; }
.small .c7.far { margin-left: 6px; }
.g-slide .rows { margin-left: 4px; }

.lines { display: flex; flex-direction: column; padding-top: 6px; gap: 5px; }
.line { display: flex; align-items: center; height: 21px; }
.para-left { width: 158px; flex: none; }
.tool { width: 21px; height: 21px; color: #444; }
.tool.pressed { background: #b9b9b9; border: 1px solid #8c8c8c; }
.b { font-weight: 700; }
.it { font: italic 700 12px "Liberation Serif", serif; }
.un { font-weight: 700; text-decoration: underline; }
.sh { font-weight: 700; text-shadow: 1px 1px 1px #888; }
.st { font-size: 10px; text-decoration: line-through; }
.split { height: 21px; padding-right: 6px; }
.face20 { width: 20px; display: flex; flex-direction: column; align-items: center; color: #444; }
.av { line-height: 10px; }
.av svg { width: 14px; height: 4px; }
.mark { border-bottom: 4px solid #f6ee26; width: 14px; margin: 0 3px; line-height: 12px; }
.hl { font-size: 10px; font-weight: 700; }
.fc { border-color: #cb6a36; font-size: 12px; font-weight: 700; }
.sep { width: 1px; height: 18px; margin: 0 3px; background: #c9c9c9; flex: none; }
.combo { display: flex; align-items: center; height: 20px; margin-right: 3px; padding: 0 2px; background: #fff; border: 1px solid #a0a0a0; }
.combo select { flex: 1; min-width: 0; appearance: none; }
.face { width: 129px; }
.size { width: 43px; }

.gallery { display: flex; width: 120px; height: 54px; margin-top: 2px; background: #fff; border: 1px solid #b4b4b4; }
.cells { flex: 1; display: grid; grid-template-columns: repeat(6, 1fr); grid-template-rows: repeat(3, 1fr); }
.cell svg { width: 16px; height: 14px; }
.scroll { width: 13px; display: grid; grid-template-rows: repeat(3, 1fr); border-left: 1px solid #b4b4b4; }
.scroll button + button { border-top: 1px solid #b4b4b4; }
.scroll svg { width: 7px; height: 7px; }
.scroll .dim { background: #e2e2e2; }

.work { display: flex; flex: 1; min-height: 0; }
.left { flex: 1; min-width: 0; display: flex; flex-direction: column; }
.docbar { display: flex; height: 22px; flex: none; background: #efefef; border-bottom: 1px solid #cfcfcf; }
.dhome { width: 23px; padding-right: 2px; }
.doctab { display: flex; align-items: center; width: 230px; padding: 0 1px 2px 4px; background: #fff; border-top: 2px solid #dc8a76; }
.docname { flex: 1; margin-left: 4px; white-space: nowrap; font-size: 11px; }
.doctab button { width: 16px; height: 16px; }
.dadd { width: 25px; border-right: 1px solid #cfcfcf; }
.docend { display: flex; margin-left: auto; border-right: 1px solid #b5b5b5; }
.dtool { width: 24px; border-left: 1px solid #c2c2c2; }
.multi { gap: 3px; padding: 0 8px 0 5px; border-left: 1px solid #c2c2c2; }

.desk { display: flex; flex: 1; min-height: 0; padding-top: 2px; }
.thumbs { width: 95px; flex: none; padding-top: 12px; border-right: 1px solid #b9b9b9; }
.thumb { align-items: flex-start; justify-content: flex-start; height: 43px; padding-left: 8px; }
.thumb svg { width: 50px; height: 31px; }
.no { display: flex; flex-direction: column; width: 18px; font-size: 13px; line-height: 13px; text-align: left; }
.no em { font: 12px/14px "DejaVu Sans", sans-serif; color: #555; margin-left: -1px; }
.thumb.on .no { color: #c0452a; }

.canvas { flex: 1; min-width: 0; position: relative; overflow: hidden; padding-top: 166px; }
.vguide { position: absolute; top: 0; bottom: 0; left: 50%; width: 1px; background: repeating-linear-gradient(#777 0 3px, transparent 3px 5px); }
.stage { position: relative; display: flex; justify-content: center; }
.hguide { position: absolute; top: 50%; left: 0; right: 2px; height: 1px; background: repeating-linear-gradient(90deg, #888 0 3px, transparent 3px 5px); }
.slide { position: relative; width: 838px; height: 472px; }
.addon { position: absolute; left: 50%; top: 112px; margin-left: -4px; width: 26px; height: 26px; background: #fff; border: 1px solid #c4c4c4; }
.addon svg { width: 16px; height: 16px; }
.vbar { width: 14px; flex: none; background: #c8c8c8; border: solid #aaa; border-width: 0 1px; }
.vbar button { width: 100%; height: 13px; background: #fff; border-bottom: 1px solid #999; border-top: 1px solid #999; }
.vbar button svg { width: 9px; height: 9px; }
.knob { height: 226px; background: #fff; border-bottom: 1px solid #999; }

.pane { position: relative; width: 197px; flex: none; overflow: hidden; padding-left: 11px; border-left: 1px solid #b5b5b5; background: #e6e6e6; }
h2 { margin: 10px 0 0; font-size: 18px; line-height: 26px; font-weight: 400; color: #a3301c; white-space: nowrap; }
.ptabs { display: flex; gap: 14px; height: 32px; padding-left: 4px; }
.ptabs .on { font-weight: 700; color: #222; }
.picons { display: flex; gap: 8px; padding: 0 0 0 1px; }
.picons button { width: 27px; height: 27px; }
.picons svg { width: 27px; height: 27px; }
.picons .on { background: #8f8f8f; }
.rule { display: flex; align-items: flex-end; height: 12px; }
.rule i { width: 9px; height: 1px; background: #bbb; }
.rule .rest { flex: 1; }
.rule svg { width: 12px; height: 8px; }
.sec { gap: 6px; height: 29px; padding-left: 5px; color: #a3301c; font-weight: 700; }
.sec svg { width: 8px; height: 8px; }
.radios { padding-left: 20px; }
.radios label { display: flex; align-items: center; gap: 4px; height: 22px; width: max-content; }
.radios input { appearance: none; width: 11px; height: 11px; margin: 0; border: 1px solid #999; border-radius: 50%; background: #fff; }
.radios input:checked { background: radial-gradient(circle, #555 0 2px, #fff 3px); }
.opts { margin: 2px 0 5px; padding: 4px 0 0 27px; border-top: 1px solid #dedede; }
.opts.last { margin: 3px 0 0; }
.opt { display: flex; align-items: center; height: 28px; white-space: nowrap; }
.opt label { width: 54px; }
.opt input[type=range] { appearance: none; width: 70px; height: 16px; background: linear-gradient(#8a8a8a, #8a8a8a) center / 100% 1px no-repeat; }
.opt input[type=range]::-webkit-slider-thumb { appearance: none; width: 2px; height: 8px; background: #666; }
.num { width: 28px; height: 23px; margin-left: auto; padding-left: 5px; background: #fff; border: 1px solid #aaa; border-right: 0; }
.types { padding: 2px 0 0 27px; }
.types div { height: 27px; line-height: 27px; white-space: nowrap; }
.types .off { color: #777; }
.pointer { position: absolute; left: 103px; top: 295px; width: 72px; height: 72px; pointer-events: none; }
</style>
